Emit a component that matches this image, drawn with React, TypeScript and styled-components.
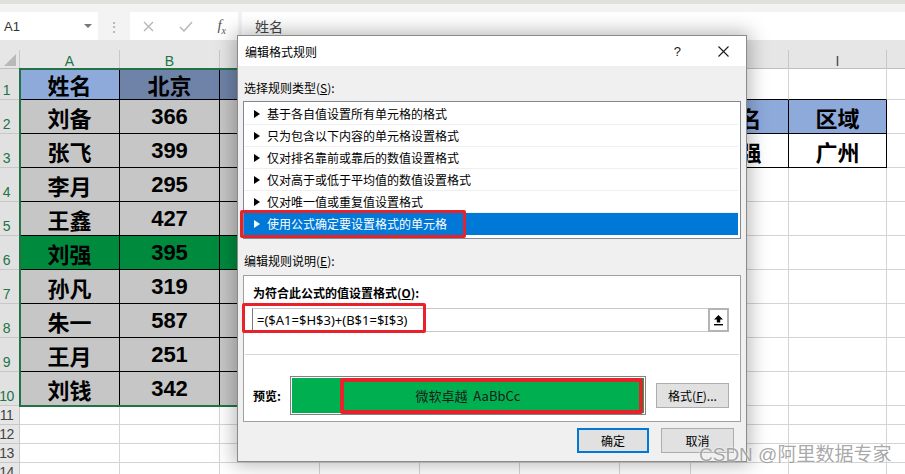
import styled, { createGlobalStyle } from "styled-components";

const GlobalStyle = createGlobalStyle`
  html, body {
    margin: 0;
    padding: 0;
    background: #ffffff;
  }
  body {
    font-family: "Noto Sans CJK SC", "Noto Sans", sans-serif;
  }
`;

const COLS = ["A", "B", "C", "D", "E", "F", "G", "H", "I", "J"];
// headers C..H sit under the dialog, J is past the window edge
const SHOWN_HEADERS = ["A", "B", "I"];
const COL_WIDTHS = [100, 100, 100, 100, 100, 100, 71, 98, 98, 120];
const ROW_HEIGHTS = [31, 34, 34, 34, 34, 34, 34, 34, 34, 34, 19, 19, 19, 19];
const TEMPLATE_COLUMNS = `20px ${COL_WIDTHS.map((w) => `${w}px`).join(" ")}`;

const names = ["姓名", "刘备", "张飞", "李月", "王鑫", "刘强", "孙凡", "朱一", "王月", "刘钱"];
const values = ["北京", "366", "399", "295", "427", "395", "319", "587", "251", "342"];

const rules = [
  "基于各自值设置所有单元格的格式",
  "只为包含以下内容的单元格设置格式",
  "仅对排名靠前或靠后的数值设置格式",
  "仅对高于或低于平均值的数值设置格式",
  "仅对唯一值或重复值设置格式",
  "使用公式确定要设置格式的单元格",
];

type CellInfo = {
  text?: string;
  bg?: string;
  darkRight?: boolean;
  darkBottom?: boolean;
};

// col index 0 = A, row is 1-based like the sheet
const cellAt = (col: number, row: number): CellInfo => {
  const info: CellInfo = {};
  if (col <= 2 && row <= 10) {
    info.darkRight = true;
    info.darkBottom = true;
    if (row === 1) info.bg = col === 0 ? "#8eaadb" : "#6f83a8";
    else if (row === 6) info.bg = "#008a3e";
    else info.bg = "#c6c6c6";
    if (col === 0) info.text = names[row - 1];
    if (col === 1) info.text = values[row - 1];
  }
  if ((col === 7 || col === 8) && (row === 2 || row === 3)) {
    info.darkRight = true;
    info.darkBottom = true;
    if (row === 2) info.bg = "#8eaadb";
    if (col === 7) info.text = row === 2 ? "姓名" : "刘强";
    else info.text = row === 2 ? "区域" : "广州";
  }
  if ((col === 7 || col === 8) && row === 1) info.darkBottom = true;
  if (col === 6 && (row === 2 || row === 3)) info.darkRight = true;
  return info;
};

const App = () => {
  return (
    <Page>
      <GlobalStyle />
      <FormulaBar>
        <NameBox>
          <span>A1</span>
          <DropArrow />
        </NameBox>
        <Grip>⋮</Grip>
        <EditIcons>
          <svg width="11" height="11" viewBox="0 0 11 11">
            <path d="M1 1 L10 10 M10 1 L1 10" stroke="#b4b4b4" strokeWidth="1.3" fill="none" />
          </svg>
          <svg width="14" height="11" viewBox="0 0 14 11">
            <path d="M1 6 L5 10 L13 1" stroke="#b8b8b8" strokeWidth="1.5" fill="none" />
          </svg>
          <Fx>
            f<sub>x</sub>
          </Fx>
        </EditIcons>
        <FormulaInput>姓名</FormulaInput>
      </FormulaBar>

      <HeaderStrip>
        <Corner>
          <CornerTriangle />
        </Corner>
        {COLS.map((c, i) => (
          <ColLabel key={c} $selected={i <= 1}>
            {SHOWN_HEADERS.includes(c) ? c : ""}
          </ColLabel>
        ))}
      </HeaderStrip>

      <SheetGrid>
        {ROW_HEIGHTS.map((_, r) => {
          const row = r + 1;
          return [
            <RowLabel key={`r${row}`} $selected={row <= 10}>
              {row}
            </RowLabel>,
            ...COLS.map((c, ci) => {
              const info = cellAt(ci, row);
              return (
                <Cell
                  key={`${c}${row}`}
                  $bg={info.bg}
                  $darkRight={info.darkRight}
                  $darkBottom={info.darkBottom}
                >
                  {info.text}
                </Cell>
              );
            }),
          ];
        })}
      </SheetGrid>

      <SelectionFrame />

      <Dialog>
        <TitleBar>
          <Title>编辑格式规则</Title>
          <HelpMark>?</HelpMark>
          <svg width="11" height="11" viewBox="0 0 11 11" style={{ marginRight: 17 }}>
            <path d="M0.5 0.5 L10.5 10.5 M10.5 0.5 L0.5 10.5" stroke="#1a1a1a" strokeWidth="1.1" fill="none" />
          </svg>
        </TitleBar>

        <DialogBody>
          <SectionLabel $top={13}>
            选择规则类型(<u>S</u>):
          </SectionLabel>
          <RuleList>
            {rules.map((r, i) => (
              <RuleItem key={r} $active={i === rules.length - 1}>
                <Arrow />
                {r}
              </RuleItem>
            ))}
          </RuleList>

          <SectionLabel $top={13}>
            编辑规则说明(<u>E</u>):
          </SectionLabel>
          <GroupBox>
            <BoldLabel>
              为符合此公式的值设置格式(<u>O</u>):
            </BoldLabel>
            <FormulaField>
              <FormulaText>=($A1=$H$3)+(B$1=$I$3)</FormulaText>
              <CollapseButton>
                <svg width="11" height="12" viewBox="0 0 11 12">
                  <path d="M5.5 1 L10 5.5 H7.2 V8.6 H3.8 V5.5 H1 Z" fill="#000" />
                  <rect x="1" y="10" width="9" height="1.4" fill="#000" />
                </svg>
              </CollapseButton>
            </FormulaField>
            <Divider />
            <PreviewRow>
              <BoldLabel as="span">预览:</BoldLabel>
              <PreviewBox>
                <PreviewFill>微软卓越&nbsp; AaBbCc</PreviewFill>
              </PreviewBox>
              <DialogButton $width={73}>
                格式(<u>F</u>)...
              </DialogButton>
            </PreviewRow>
          </GroupBox>

          <ButtonRow>
            <DialogButton $width={72} $primary>
              确定
            </DialogButton>
            <DialogButton $width={73}>取消</DialogButton>
          </ButtonRow>
        </DialogBody>

        <RedMark $left={2} $top={174} $w={226} $h={28} $stroke={3} />
        <RedMark $left={4} $top={267} $w={184} $h={30} $stroke={3} />
        <RedMark $left={102} $top={342} $w={303} $h={36} $stroke={4} />
      </Dialog>

      <Watermark>CSDN @阿里数据专家</Watermark>
    </Page>
  );
};

const Page = styled.div`
  position: relative;
  width: 905px;
  height: 474px;
  overflow: hidden;
  background: #ffffff;
`;

const FormulaBar = styled.div`
  box-sizing: border-box;
  height: 40px;
  border-top: 4px solid #e2e0dd;
  padding-top: 8px;
  background: #f3f3f3;
  display: flex;
  align-items: stretch;
`;

const NameBox = styled.div`
  width: 98px;
  background: #ffffff;
  display: flex;
  align-items: center;
  justify-content: space-between;
  padding: 0 6px 0 4px;
  box-sizing: border-box;
  font-family: "Liberation Sans", sans-serif;
  font-size: 13px;
  color: #333;
`;

const DropArrow = styled.span`
  width: 0;
  height: 0;
  border-left: 4px solid transparent;
  border-right: 4px solid transparent;
  border-top: 4px solid #777;
`;

const Grip = styled.div`
  width: 32px;
  display: flex;
  align-items: center;
  justify-content: center;
  color: #a8a8a8;
  font-size: 14px;
`;

const EditIcons = styled.div`
  width: 108px;
  background: #ffffff;
  display: flex;
  align-items: center;
  justify-content: space-between;
  padding: 0 12px 0 13px;
  box-sizing: border-box;
`;

const Fx = styled.span`
  font-family: "Liberation Serif", serif;
  font-style: italic;
  font-size: 15px;
  color: #555;
  sub {
    font-size: 10px;
  }
`;

const FormulaInput = styled.div`
  flex: 1;
  margin-left: 4px;
  background: #ffffff;
  display: flex;
  align-items: center;
  padding-left: 13px;
  font-family: "Noto Sans CJK SC", sans-serif;
  font-size: 14px;
  color: #444;
`;

const HeaderStrip = styled.div`
  box-sizing: border-box;
  height: 29px;
  padding-top: 10px;
  background: #e6e6e6;
  border-bottom: 1px solid #bfbfbf;
  display: grid;
  grid-template-columns: ${TEMPLATE_COLUMNS};
`;

const Corner = styled.div`
  position: relative;
  border-right: 1px solid #c8c8c8;
`;

const CornerTriangle = styled.span`
  position: absolute;
  right: 3px;
  bottom: 3px;
  width: 0;
  height: 0;
  border-left: 12px solid transparent;
  border-bottom: 12px solid #b9b9b9;
`;

const ColLabel = styled.div<{ $selected?: boolean }>`
  border-right: 1px solid #c8c8c8;
  display: flex;
  align-items: center;
  justify-content: center;
  padding-top: 3px;
  font-family: "Liberation Sans", sans-serif;
  font-size: 14px;
  color: ${(p) => (p.$selected ? "#217346" : "#444")};
`;

const SheetGrid = styled.div`
  display: grid;
  grid-template-columns: ${TEMPLATE_COLUMNS};
  grid-template-rows: ${ROW_HEIGHTS.map((h) => `${h}px`).join(" ")};
`;

const RowLabel = styled.div<{ $selected?: boolean }>`
  box-sizing: border-box;
  background: ${(p) => (p.$selected ? "#e1e1e1" : "#e6e6e6")};
  border-right: 1px solid #c8c8c8;
  border-bottom: 1px solid #c8c8c8;
  display: flex;
  align-items: flex-end;
  justify-content: center;
  padding: 0 6px 1px 0;
  font-family: "Liberation Sans", sans-serif;
  font-size: 14px;
  line-height: 16px;
  letter-spacing: -0.5px;
  color: ${(p) => (p.$selected ? "#217346" : "#444")};
`;

const Cell = styled.div<{ $bg?: string; $darkRight?: boolean; $darkBottom?: boolean }>`
  box-sizing: border-box;
  display: flex;
  align-items: center;
  justify-content: center;
  background: ${(p) => p.$bg ?? "#ffffff"};
  border-right: 1px solid ${(p) => (p.$darkRight ? "#000000" : "#d4d4d4")};
  border-bottom: 1px solid ${(p) => (p.$darkBottom ? "#000000" : "#d4d4d4")};
  font-family: "Liberation Sans", "Noto Sans CJK SC", sans-serif;
  font-weight: 700;
  font-size: 22px;
  color: #000;
  white-space: nowrap;
  overflow: hidden;
`;

const SelectionFrame = styled.div`
  position: absolute;
  left: 19px;
  top: 68px;
  width: 303px;
  height: 339px;
  box-sizing: border-box;
  border: 2px solid #217346;
  pointer-events: none;
`;

const Dialog = styled.div`
  position: absolute;
  left: 237px;
  top: 35px;
  width: 510px;
  height: 427px;
  box-sizing: border-box;
  border: 1px solid #8a8a8a;
  background: #f0f0f0;
  box-shadow: 0 0 18px 3px rgba(0, 0, 0, 0.28);
  font-family: "Noto Sans CJK SC", sans-serif;
  font-size: 12px;
  color: #000;
`;

const TitleBar = styled.div`
  height: 30px;
  background: #ffffff;
  display: flex;
  align-items: center;
  padding-left: 7px;
`;

const Title = styled.div`
  flex: 1;
  font-size: 12px;
  color: #000;
`;

const HelpMark = styled.div`
  margin-right: 37px;
  font-family: "Liberation Sans", sans-serif;
  font-size: 13px;
  color: #1a1a1a;
`;

const DialogBody = styled.div`
  padding: 0 5px;
  display: flex;
  flex-direction: column;
`;

const SectionLabel = styled.div<{ $top: number }>`
  margin-top: ${(p) => p.$top}px;
  margin-bottom: 4px;
  line-height: 18px;
  height: 18px;
  padding-left: 1px;
  u {
    text-decoration-thickness: 1px;
  }
`;

const RuleList = styled.div`
  box-sizing: border-box;
  height: 138px;
  border: 1px solid #828790;
  background: #ffffff;
  padding: 1px 2px 3px 0;
`;

const RuleItem = styled.div<{ $active?: boolean }>`
  box-sizing: border-box;
  height: 22px;
  display: flex;
  align-items: center;
  padding-left: 10px;
  border-bottom: 1px solid ${(p) => (p.$active ? "#0078d7" : "#efefef")};
  background: ${(p) => (p.$active ? "#0078d7" : "transparent")};
  color: ${(p) => (p.$active ? "#ffffff" : "#000000")};
`;

const Arrow = styled.span`
  width: 0;
  height: 0;
  margin-right: 7px;
  border-top: 4px solid transparent;
  border-bottom: 4px solid transparent;
  border-left: 6px solid currentColor;
`;

const GroupBox = styled.div`
  box-sizing: border-box;
  height: 147px;
  margin-top: 1px;
  border: 1px solid #a0a0a0;
  background: #ffffff;
  display: flex;
  flex-direction: column;
`;

const BoldLabel = styled.div`
  margin: 8px 0 0 9px;
  line-height: 18px;
  font-weight: 700;
`;

const FormulaField = styled.div`
  box-sizing: border-box;
  height: 24px;
  margin: 6px 11px 0 8px;
  border-top: 1px solid #c8c8c8;
  border-bottom: 1px solid #c8c8c8;
  border-left: 1px solid #7a7a7a;
  display: flex;
  align-items: stretch;
`;

const FormulaText = styled.div`
  flex: 1;
  display: flex;
  align-items: center;
  padding-left: 4px;
  font-family: "Noto Sans", sans-serif;
  font-size: 13px;
  color: #000;
`;

const CollapseButton = styled.div`
  box-sizing: border-box;
  width: 21px;
  margin: -1px 0;
  border: 2px solid #b4b4b4;
  background: #ffffff;
  display: flex;
  align-items: center;
  justify-content: center;
`;

const Divider = styled.div`
  height: 1px;
  margin: 22px 1px 0;
  background: #d6d6d6;
`;

const PreviewRow = styled.div`
  display: flex;
  align-items: center;
  margin-top: 21px;
  span {
    margin: 0;
    width: 37px;
    padding-left: 9px;
  }
`;

const PreviewBox = styled.div`
  box-sizing: border-box;
  width: 356px;
  height: 39px;
  border: 1px solid #828282;
  padding: 1px;
  background: #ffffff;
`;

const PreviewFill = styled.div`
  height: 100%;
  background: #00b050;
  display: flex;
  align-items: center;
  justify-content: center;
  font-size: 13px;
  color: #1a1a1a;
`;

const DialogButton = styled.div<{ $width: number; $primary?: boolean }>`
  box-sizing: border-box;
  width: ${(p) => p.$width}px;
  height: 25px;
  margin-left: 10px;
  background: #e1e1e1;
  border: ${(p) => (p.$primary ? "2px solid #0078d7" : "1px solid #adadad")};
  display: flex;
  align-items: center;
  justify-content: center;
  font-size: 12px;
  color: #000;
`;

const ButtonRow = styled.div`
  display: flex;
  justify-content: flex-end;
  margin-top: 6px;
  padding-right: 7px;
  & > div + div {
    margin-left: 12px;
  }
`;

const RedMark = styled.div<{ $left: number; $top: number; $w: number; $h: number; $stroke: number }>`
  position: absolute;
  left: ${(p) => p.$left}px;
  top: ${(p) => p.$top}px;
  width: ${(p) => p.$w}px;
  height: ${(p) => p.$h}px;
  box-sizing: border-box;
  border: ${(p) => p.$stroke}px solid #e8222b;
  border-radius: 2px;
  pointer-events: none;
`;

const Watermark = styled.div`
  position: absolute;
  left: 699px;
  top: 442px;
  font-family: "Liberation Sans", "Noto Sans CJK SC", sans-serif;
  font-size: 19px;
  line-height: 26px;
  color: rgba(130, 130, 130, 0.7);
  text-shadow: 0 0 2px #ffffff;
  white-space: nowrap;
`;

export default App;
